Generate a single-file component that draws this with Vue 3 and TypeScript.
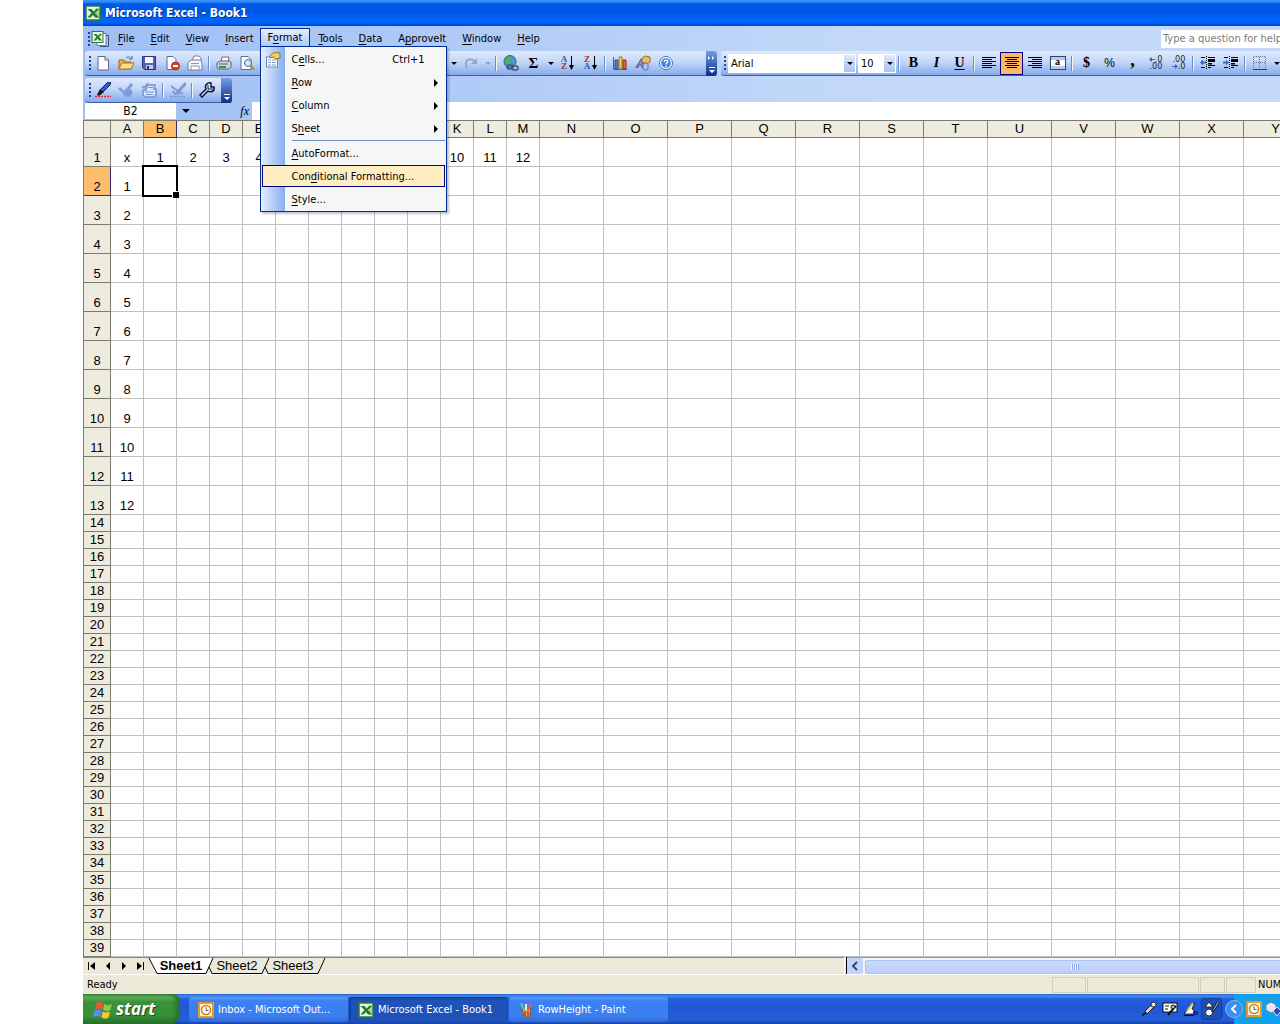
<script setup lang="ts">
import { ref } from 'vue'

interface Tool {
  kind: 'button' | 'sep' | 'arrow' | 'space'
  name?: string
  active?: boolean
}
interface MenuTitle {
  pre: string
  key: string
  post: string
}
interface MenuEntry extends MenuTitle {
  shortcut?: string
  sub?: boolean
  hot?: boolean
  line?: boolean
  icon?: string
}

const b = (name: string, active = false): Tool => ({ kind: 'button', name, active })
const sep: Tool = { kind: 'sep' }
const arrow: Tool = { kind: 'arrow' }

const standard: Tool[] = [
  b('new'), b('open'), b('save'), b('permission'), b('mail'), sep, b('print'), b('preview'),
  { kind: 'space' }, arrow, b('redo'), arrow, sep, b('link'), b('sum'), arrow, b('sortAsc'), b('sortDesc'),
  sep, b('chart'), b('drawing'), b('help'),
]
const formatting: Tool[] = [
  sep, b('bold'), b('italic'), b('underline'), sep, b('left'), b('center', true), b('right'), b('merge'),
  sep, b('currency'), b('percent'), b('comma'), b('moreDecimals'), b('lessDecimals'),
  sep, b('outdent'), b('indent'), sep, b('borders'), arrow,
]
const approval: Tool[] = [b('sign'), b('verify'), b('review'), sep, b('clear'), sep, b('wrench')]

const menusBefore: MenuTitle[] = [
  { pre: '', key: 'F', post: 'ile' },
  { pre: '', key: 'E', post: 'dit' },
  { pre: '', key: 'V', post: 'iew' },
  { pre: '', key: 'I', post: 'nsert' },
]
const menusAfter: MenuTitle[] = [
  { pre: '', key: 'T', post: 'ools' },
  { pre: '', key: 'D', post: 'ata' },
  { pre: 'A', key: 'p', post: 'proveIt' },
  { pre: '', key: 'W', post: 'indow' },
  { pre: '', key: 'H', post: 'elp' },
]
const formatMenu: MenuEntry[] = [
  { pre: 'C', key: 'e', post: 'lls...', shortcut: 'Ctrl+1', icon: 'cells' },
  { pre: '', key: 'R', post: 'ow', sub: true },
  { pre: '', key: 'C', post: 'olumn', sub: true },
  { pre: 'S', key: 'h', post: 'eet', sub: true },
  { pre: '', key: 'A', post: 'utoFormat...', line: true },
  { pre: 'Con', key: 'd', post: 'itional Formatting...', hot: true },
  { pre: '', key: 'S', post: 'tyle...' },
]

const columns = 'ABCDEFGHIJKLMNOPQRSTUVWXY'.split('')
const rows = Array.from({ length: 39 }, (_, i) => i + 1)
function cell(row: number, col: number): string {
  if (row === 1) return col === 0 ? 'x' : col <= 12 ? String(col) : ''
  if (col === 0 && row <= 13) return String(row - 1)
  return ''
}

const nameBox = ref('B2')
const formula = ref('')
const font = ref('Arial')
const size = ref('10')

const page = '<path d="M3 1.5h7l3.5 3.5v10H3z" fill="#fff" stroke="#5a6b96"/><path d="M10 1.5v3.5h3.5" fill="#cfdcf4" stroke="#5a6b96"/>'
const lines = (rowsOf: [number, number][]): string =>
  rowsOf.map(([x, w], i) => `<path d="M${x} ${2.5 + i * 2}h${w}" stroke="#000"/>`).join('')
const indentLines =
  '<path d="M1 2.5h4M8 2.5h7M8 4.5h7M8 6.5h7M8 8.5h4M8 10.5h7M1 12.5h4M8 12.5h3" stroke="#000"/><path d="M8 5.5h7M8 9h4" stroke="#000"/><path d="M6.500 1v14" stroke="#000" stroke-dasharray="1 1"/>'
const excel =
  '<rect x="1" y="1" width="14" height="14" fill="#e9f5e4" stroke="#2d7d32" stroke-width="1.5"/><path d="M11 3h3v10h-3z" fill="#a8d49a"/><path d="M2.500 4h4L8.500 6.500 11 4h3L10 8l4 4.500h-4L8 10l-2.500 2.500h-3L6.500 8z" fill="#237a2c"/>'
const outlook =
  '<rect x="1" y="1" width="14" height="14" fill="#fff3cf" stroke="#e39a2c" stroke-width="2"/><circle cx="8" cy="8" r="4.500" fill="#fff" stroke="#c98322" stroke-width="1.500"/><path d="M8 5v3.500h2.500" fill="none" stroke="#7d5a2c"/>'

const icons: Record<string, string> = {
  excel,
  outlook,
  book:
    '<path d="M9 2.500h6v12H6v-3" fill="#fff" stroke="#6c7faa"/><path d="M15 4.500h2.500v11H9" fill="none" stroke="#3c4f7e"/><rect x="1" y=".5" width="11" height="11" fill="#e9f5e4" stroke="#2d7d32"/><path d="M2.500 3h3L7 5l1.500-2H11L8 6l3 3.500H8L6.500 7.500 5 9.500H2.500L5.500 6z" fill="#237a2c"/>',
  new: page,
  open:
    '<path d="M1 14V5h5l1 2h6v7z" fill="#e9b44c" stroke="#9a6a1c"/><path d="M1 14l3-6h12l-3 6z" fill="#ffdd82" stroke="#a77722"/><path d="M8 3c2-2 4-1 5 1m1-3v3h-3" fill="none" stroke="#3b62ad"/>',
  save:
    '<path d="M1.500 1.500h13v13h-11l-2-2z" fill="#5562b8" stroke="#28327c"/><path d="M4 2h8v6H4z" fill="#f3f6ff"/><path d="M5 10h7v4H5z" fill="#c5cce2"/><path d="M6 11h2v3H6z" fill="#28327c"/>',
  permission:
    '<path d="M3 1.500h6l3 3v10H3z" fill="#fff" stroke="#5a6b96"/><circle cx="11.500" cy="11" r="4" fill="#d9432c" stroke="#a52a16"/><path d="M9 11h5" stroke="#fff" stroke-width="2"/>',
  mail:
    '<path d="M5 6l2-5h5l2 2v5" fill="#fff" stroke="#73809f"/><path d="M1 8l3-3h10l1 3v7H1z" fill="#f4f6fb" stroke="#73809f"/><path d="M4 8.500h8M4 11h8v4H4z" fill="#fff" stroke="#8b96b0"/>',
  print:
    '<path d="M5 7l1-5h7l-1 5" fill="#fff" stroke="#64708c"/><path d="M1 8l3-2h10l1 2v4l-3 2H2l-1-2z" fill="#cfd4df" stroke="#59647e"/><path d="M3 9h9" stroke="#59647e"/><path d="M3 12h7" stroke="#2d9a38" stroke-width="2"/>',
  preview:
    '<path d="M2 1.500h7l3 3v10H2z" fill="#fff" stroke="#5a6b96"/><circle cx="9" cy="8" r="3.500" fill="#cfe7fb" stroke="#536890"/><path d="M11.500 10.500l3.500 4" stroke="#b7872f" stroke-width="2"/>',
  redo: '<path d="M4 13C0 4 8 2 12 7" fill="none" stroke="#95a6c8" stroke-width="2"/><path d="M14 3v6H8z" fill="#95a6c8"/>',
  link:
    '<circle cx="7" cy="6.500" r="6" fill="#4b94d8" stroke="#2c5e9a"/><path d="M3 3l4-2 2 3-3 2 1 3-3 1-2-4zM10 4l2 2-2 4z" fill="#4fb34a"/><rect x="4" y="10" width="6" height="4" rx="2" fill="none" stroke="#46536e" stroke-width="1.500"/><rect x="9" y="11" width="6" height="4" rx="2" fill="none" stroke="#46536e" stroke-width="1.500"/>',
  chart:
    '<path d="M1.500 2v12.500H15" fill="none" stroke="#4a5f92"/><path d="M3 5h3v9H3z" fill="#4c7ed2" stroke="#28508f"/><path d="M7 2h3v12H7z" fill="#f6cf49" stroke="#a3791c"/><path d="M11 5h3v9h-3z" fill="#e0603c" stroke="#8f2e18"/>',
  drawing:
    '<path d="M1 12.500L6 4l3 8.500H7L6 10H4l-1 2.500z" fill="#8f8ad2" stroke="#5c57a2"/><path d="M7 3l3-2 5 1v5l-3 2-5-2z" fill="#e8bd63" stroke="#96712b"/><rect x="8" y="8" width="5" height="7" rx="2" fill="#b7bff0" stroke="#5c6cae"/>',
  help:
    '<circle cx="8" cy="8" r="6.500" fill="#fff" stroke="#3d6fc9"/><circle cx="8" cy="8" r="4.800" fill="#4580dc"/><path d="M6.200 7C6 4.500 10 4.500 9.800 6.700 9.600 8 8 7.800 8 9.500M8 10.500v1.500" fill="none" stroke="#fff" stroke-width="1.300"/>',
  left: lines([[1, 14], [1, 10], [1, 14], [1, 10], [1, 14], [1, 10]]),
  center: lines([[1, 14], [3, 10], [1, 14], [3, 10], [1, 14], [3, 10]]),
  right: lines([[1, 14], [5, 10], [1, 14], [5, 10], [1, 14], [5, 10]]),
  outdent: indentLines + '<path d="M0 7.500l3-3v2h3v2H3v2z" fill="#3d64c4"/>',
  indent: indentLines + '<path d="M6 7.500l-3-3v2H0v2h3v2z" fill="#3d64c4"/>',
  borders: '<path d="M2 1.500h12M2 7.500h12M1.500 2v12M7.500 2v12M13.500 2v12" stroke="#66718c" stroke-dasharray="1 1"/><path d="M1 14.500h14" stroke="#333c55"/>',
  sign: '<path d="M13 0h3l-1 3-7 7-3-2z" fill="#2f5fd0" stroke="#0c1a5c"/><path d="M5 7l4 3-5 4-2-1z" fill="#11131f"/><path d="M0 14.500h16" stroke="#e02c2c" stroke-width="1.500" stroke-dasharray="2 1"/>',
  verify: '<path d="M0 7l2-2 4 4 7-8 2 2-3 4c4 1 3 8-2 8-3 0-5-2-5-4z" fill="#7c9fdc"/>',
  review: '<path d="M1 4l2 2 4-5" fill="none" stroke="#6f93d4" stroke-width="1.500"/><path d="M6 3h8l-1 4h2v6l-2 2H4l-2-2V8h3z" fill="#dbe7fb" stroke="#6f93d4" stroke-width="1.500"/><path d="M7 5.500h5M4 10h9M5 12.500h7" stroke="#6f93d4"/>',
  clear: '<path d="M16 1L7 11" fill="none" stroke="#7c9bd4" stroke-width="3"/><path d="M1 4l4 3 8 5M3 9l2 3 5-1" fill="none" stroke="#7c9bd4" stroke-width="2"/><path d="M0 14.500h15" stroke="#7c9bd4" stroke-width="1.500" stroke-dasharray="3 1"/>',
  wrench: '<path d="M1 13l6-6C5 3 9 0 12 1v4h3c1 4-3 6-6 4l-6 6z" fill="#dce8ff" stroke="#0b1242" stroke-width="1.500"/><path d="M9 3v4h5" fill="none" stroke="#0b1242"/>',
  cells:
    '<rect x="1.500" y="5" width="11" height="10" fill="#fff" stroke="#7189b5"/><path d="M3 8h3M3 10.500h3M3 13h3M7 8h4M7 10.500h4M7 13h4" stroke="#7e96c6"/><path d="M5 4c2-3 4-4 10-3v5l-4 1-3-2-3 1z" fill="#efcf58" stroke="#8b7326"/>',
  paint:
    '<path d="M4 7h9l-1 8H6z" fill="#d9a35b" stroke="#7a5224"/><path d="M6 8L3 1" stroke="#60d060" stroke-width="2"/><path d="M8 8V2" stroke="#e9e9f8" stroke-width="2"/><path d="M10 8l3-6" stroke="#ed5f46" stroke-width="2"/><path d="M7 9v5M10 9v5" stroke="#bb3e2b" stroke-width="1.500"/>',
  mic: '<path d="M2 15c-2-2 4-2 3-4" fill="none" stroke="#111" stroke-width="1.500"/><path d="M4 10l6-6 3 2-7 7z" fill="#d0d0d0" stroke="#222"/><circle cx="12.500" cy="3.500" r="2.500" fill="#e8e8e8" stroke="#222"/>',
  tools: '<rect x="1" y="2" width="14" height="9" fill="#fff" stroke="#111"/><path d="M3 5h4M3 8h3" stroke="#111"/><path d="M6 14l6-7 2-2" stroke="#111" stroke-width="2"/><circle cx="11" cy="6" r="2" fill="#bbb" stroke="#111"/>',
  hand: '<path d="M1 13l4-5 7-7-3 7 3 2v3z" fill="#fff" stroke="#222"/><path d="M4 10l6-8" stroke="#e0bf42" stroke-width="2"/><path d="M10 10h5v4h-5z" fill="#1d2d9a"/><path d="M1 14.500h10" stroke="#111"/>',
  shapes: '<path d="M1 6l4-5 4 5z" fill="#fff" stroke="#222"/><circle cx="5" cy="11.500" r="3.500" fill="#fff" stroke="#222"/><path d="M15 2l-5 8-2 1 1-3 4-7" fill="#8faedb" stroke="#111"/>',
  network: '<path d="M1 4l5-3 5 3v5l-5 3-5-3z" fill="#e6e9ef" stroke="#7c8596"/><path d="M8 10l4-4 4 4-4 5z" fill="#2947b6" stroke="#dbe6ff"/>',
  flag:
    '<path d="M3 3c2-1.500 4-1.500 6 0L8 8.500c-2-1.300-4-1.300-6.500 0z" fill="#f0582c"/><path d="M10 3.500c2 1.300 4 1.300 7 0L15.500 9c-2 1.300-4 1.300-6.500 0z" fill="#8cc84b"/><path d="M1.200 9.700c2-1.300 4-1.300 6.500 0l-1.200 5.500c-2-1.300-4-1.300-6.500 0z" fill="#5b8df0"/><path d="M8.700 10.200c2 1.300 4 1.300 6.500 0l-1.200 5.500c-2 1.300-4 1.300-6.500 0z" fill="#fbc62e"/>',
}
const langIcons = ['mic', 'tools', 'hand', 'shapes']
const textIcons: Record<string, string> = { bold: 'B', italic: 'I', underline: 'U', sum: 'Σ', currency: '$', percent: '%', comma: ',' }
const stacked: Record<string, [string, string]> = {
  sortAsc: ['A', 'Z'],
  sortDesc: ['Z', 'A'],
  moreDecimals: ['.0', '.00'],
  lessDecimals: ['.00', '.0'],
}
const tasks = [
  { label: 'Inbox - Microsoft Out...', icon: 'outlook', on: false },
  { label: 'Microsoft Excel - Book1', icon: 'excel', on: true },
  { label: 'RowHeight - Paint', icon: 'paint', on: false },
]
const bars = { standard, formatting, approval }
</script>

<template>
  <div class="screen">
    <header class="title">
      <svg class="ico" viewBox="0 0 16 16" v-html="icons.excel"></svg>
      <h1>Microsoft Excel - Book1</h1>
    </header>

    <div class="chrome">
      <nav class="menubar">
        <i class="grip"></i>
        <svg class="book" viewBox="0 0 18 16" v-html="icons.book"></svg>
        <button v-for="m in menusBefore" :key="m.key" class="menu">{{ m.pre }}<u>{{ m.key }}</u>{{ m.post }}</button>
        <div class="menu-open">
          <button class="menu">F<u>o</u>rmat</button>
          <ul class="dropdown">
            <li v-for="e in formatMenu" :key="e.pre + e.key + e.post" :class="{ line: e.line }">
              <button :class="{ hot: e.hot }">
                <span class="gutter"><svg v-if="e.icon" class="ico" viewBox="0 0 16 16" v-html="icons[e.icon]"></svg></span>
                <span class="entry">{{ e.pre }}<u>{{ e.key }}</u>{{ e.post }}</span>
                <span v-if="e.shortcut" class="shortcut">{{ e.shortcut }}</span>
                <svg v-if="e.sub" class="sub" viewBox="0 0 4 8"><path d="M0 0l4 4-4 4z" /></svg>
              </button>
            </li>
          </ul>
        </div>
        <button v-for="m in menusAfter" :key="m.key" class="menu">{{ m.pre }}<u>{{ m.key }}</u>{{ m.post }}</button>
        <input class="ask" type="text" placeholder="Type a question for help" aria-label="Type a question for help" />
      </nav>

      <div class="bars">
        <div v-for="(tools, id) in bars" :key="id" class="bar" :class="id">
          <i class="grip"></i>
          <template v-if="id === 'formatting'">
            <span class="pick font"><select v-model="font" aria-label="Font"><option>Arial</option></select><i></i></span>
            <span class="pick size"><select v-model="size" aria-label="Font size"><option>10</option></select><i></i></span>
          </template>
          <template v-for="(t, n) in tools" :key="n">
            <i v-if="t.kind === 'sep'" class="sep"></i>
            <i v-else-if="t.kind === 'space'" class="space"></i>
            <button v-else-if="t.kind === 'arrow'" class="arrow" aria-label="More choices"></button>
            <button v-else class="tool" :class="[t.name, { active: t.active }]" :aria-label="t.name">
              <span v-if="textIcons[t.name!]" class="glyph">{{ textIcons[t.name!] }}</span>
              <template v-else-if="stacked[t.name!]">
                <span class="stack">
                  <b><svg v-if="t.name === 'moreDecimals'" class="way" viewBox="0 0 6 5"><path d="M0 2.500L3 0v2h3v1H3v2z" /></svg>{{ stacked[t.name!][0] }}</b>
                  <b><svg v-if="t.name === 'lessDecimals'" class="way" viewBox="0 0 6 5"><path d="M6 2.500L3 0v2H0v1h3v2z" /></svg>{{ stacked[t.name!][1] }}</b>
                </span>
                <svg v-if="t.name!.startsWith('sort')" class="down" viewBox="0 0 5 14"><path d="M2 0h1v9h2l-2.500 5L0 9h2z" /></svg>
              </template>
              <span v-else-if="t.name === 'merge'" class="merged">a</span>
              <svg v-else class="ico" viewBox="0 0 16 16" v-html="icons[t.name!]"></svg>
            </button>
          </template>
          <button v-if="id !== 'formatting'" class="cap" aria-label="Toolbar options">
            <svg viewBox="0 0 11 25"><path v-if="id === 'standard'" d="M2 5l2 2-2 2zM6 5l2 2-2 2z" /><path d="M3 16h6v1H3zM3 19h6l-3 3z" /></svg>
          </button>
        </div>
      </div>

      <div class="formula">
        <input v-model="nameBox" class="name" type="text" aria-label="Name box" />
        <button class="arrow" aria-label="Names"></button>
        <span class="fx">fx</span>
        <input v-model="formula" class="text" type="text" aria-label="Formula" />
      </div>
    </div>

    <main class="sheet">
      <table>
        <colgroup>
          <col class="c-head" />
          <col v-for="(c, i) in columns" :key="c" :class="i < 13 ? 'c-small' : 'c-wide'" />
        </colgroup>
        <thead>
          <tr>
            <th></th>
            <th v-for="c in columns" :key="c" scope="col" :class="{ picked: c === 'B' }">{{ c }}</th>
          </tr>
        </thead>
        <tbody>
          <tr v-for="r in rows" :key="r" :class="{ tall: r <= 13 }">
            <th scope="row" :class="{ picked: r === 2 }">{{ r }}</th>
            <td v-for="(c, i) in columns" :key="c" :class="{ cursor: r === 2 && i === 1 }">{{ cell(r, i) }}</td>
          </tr>
        </tbody>
      </table>
    </main>

    <div class="tabs">
      <div class="tab-area">
        <button class="step" aria-label="First sheet"><svg viewBox="0 0 8 8"><path d="M0 0h1v8H0zM7 0v8L2 4z" /></svg></button>
        <button class="step" aria-label="Previous sheet"><svg viewBox="0 0 8 8"><path d="M6 0v8L2 4z" /></svg></button>
        <button class="step" aria-label="Next sheet"><svg viewBox="0 0 8 8"><path d="M2 0v8l4-4z" /></svg></button>
        <button class="step" aria-label="Last sheet"><svg viewBox="0 0 8 8"><path d="M7 0h1v8H7zM1 0v8l5-4z" /></svg></button>
        <svg class="slant" viewBox="0 0 10 16"><path d="M1 0h9v16H9z" fill="#fff" /><path d="M1 0l8 15.500h1" class="edge" /></svg>
        <button class="tab on">Sheet1</button>
        <svg class="slant" viewBox="0 0 10 16"><path d="M0 0h9L2 16H0z" fill="#fff" /><path d="M9 0L2 15.500H0M5 9l3 6.500h2" class="edge" /></svg>
        <button class="tab">Sheet2</button>
        <svg class="slant" viewBox="0 0 10 16"><path d="M9 0L2 15.500H0M5 9l3 6.500h2" class="edge" /></svg>
        <button class="tab">Sheet3</button>
        <svg class="slant" viewBox="0 0 10 16"><path d="M9 0L2 15.500H0" class="edge" /></svg>
      </div>
      <i class="splitter"></i>
      <div class="scroll">
        <button aria-label="Scroll left"><svg viewBox="0 0 8 10"><path d="M6 1L2 5l4 4" fill="none" stroke="#35496f" stroke-width="2" /></svg></button>
        <div class="thumb"><i></i></div>
      </div>
    </div>

    <div class="status">
      <span class="ready">Ready</span>
      <i class="pane p1"></i><i class="pane p2"></i><i class="pane p3"></i><i class="pane p4"></i>
      <span class="num">NUM</span>
    </div>

    <footer class="taskbar">
      <button class="start"><svg viewBox="0 0 17 17" v-html="icons.flag"></svg>start</button>
      <button v-for="t in tasks" :key="t.label" class="task" :class="{ on: t.on }">
        <svg class="ico" viewBox="0 0 16 16" v-html="icons[t.icon]"></svg>{{ t.label }}
      </button>
      <div class="lang">
        <button v-for="l in langIcons" :key="l" :class="l" :aria-label="l"><svg viewBox="0 0 16 16" v-html="icons[l]"></svg></button>
      </div>
      <div class="tray">
        <button class="chev" aria-label="Show hidden icons"><svg viewBox="0 0 8 10"><path d="M6 1L2 5l4 4" fill="none" stroke="#fff" stroke-width="2" /></svg></button>
        <svg class="ico" viewBox="0 0 16 16" v-html="icons.outlook"></svg>
        <svg class="ico" viewBox="0 0 16 16" v-html="icons.network"></svg>
      </div>
    </footer>
  </div>
</template>

<style>
body { background: #fff; overflow-x: hidden; }
</style>

<style scoped>
.screen {
  margin-left: 83px;
  overflow: hidden;
  font: 11px/13px "DejaVu Sans Condensed", "DejaVu Sans", sans-serif;
  color: #000;
}
.screen * { box-sizing: border-box; }
button, input, select { font: inherit; color: inherit; border: 0; padding: 0; margin: 0; background: none; border-radius: 0; outline: 0; }
button { white-space: nowrap; }
svg { display: block; flex: none; }
.ico { width: 16px; height: 16px; }
u { text-underline-offset: 2px; text-decoration-thickness: 1px; text-decoration-skip-ink: none; }

.title {
  height: 26px;
  display: flex;
  align-items: center;
  gap: 4px;
  padding-left: 2px;
  background: linear-gradient(#3d95ff 0, #2a86f8 2px, #0057e5 4px, #0055e5 12px, #0065fd 19px, #0062f6 23px, #0040c8 26px);
}
.title h1 { margin: 0; font: bold 12px/16px "DejaVu Sans Condensed", sans-serif; color: #fff; text-shadow: 1px 1px #0a2f8c; }

.chrome { background: linear-gradient(90deg, #9ebef5, #c4d9f9 800px); }
.menubar { height: 25px; display: flex; align-items: center; padding-left: 5px; }
.grip { flex: none; width: 2px; height: 14px; background: repeating-linear-gradient(#27418a 0 2px, transparent 2px 4px); }
.book { width: 18px; height: 16px; margin: 0 1px; }
.menu { height: 19px; padding: 0 8px; flex: none; }
.menu-open { position: relative; flex: none; height: 25px; display: flex; align-items: center; margin-left: -2px; }
.menu-open > .menu { height: 21px; padding: 0 7px 4px; border: 1px solid #002d96; border-bottom: 0; background: linear-gradient(#e6effd, #a6c4f3); }
.dropdown {
  position: absolute;
  z-index: 5;
  left: 0;
  top: 20px;
  width: 187px;
  margin: 0;
  padding: 1px 1px 0;
  list-style: none;
  border: 1px solid #002d96;
  background: linear-gradient(90deg, #e3efff, #88aef0 24px, #f6f6f6 24px);
  box-shadow: 2px 2px 2px rgba(60, 80, 120, .35);
}
.dropdown button { width: 100%; height: 23px; display: flex; align-items: center; text-align: left; border: 1px solid transparent; }
.dropdown .hot { height: 22px; margin-bottom: 1px; border-color: #000080; background: #ffeec2; }
.dropdown .line { padding-top: 2px; background: linear-gradient(#6a8ccb, #6a8ccb) 30px 0 / 160px 1px no-repeat; }
.gutter { width: 29px; padding-left: 2px; }
.entry { flex: 1; }
.shortcut { padding-right: 19px; }
.sub { width: 4px; height: 8px; margin-right: 6px; }
.ask { margin-left: auto; flex: none; width: 119px; height: 18px; padding-left: 2px; background: #fff; }
.ask::placeholder { color: #7d7d7d; opacity: 1; }

.bars { display: flex; flex-wrap: wrap; row-gap: 2px; padding: 0 0 0 2px; margin-right: -20px; height: 51px; align-content: flex-start; }
.bar {
  flex: none;
  height: 25px;
  display: flex;
  align-items: center;
  padding-left: 4px;
  border-radius: 3px;
  border-bottom: 1px solid #3b619c;
  background: linear-gradient(#dfeafc, #c3d7f8 45%, #85aaeb);
}
.standard { margin-right: 4px; }
.standard .cap { margin-left: 29px; }
.formatting { flex: 1 1 500px; min-width: 0; padding-left: 3px; border-radius: 3px 0 0 3px; }
.approval .cap { margin-left: 3px; }
.tool { flex: none; width: 23px; height: 23px; display: flex; align-items: center; justify-content: center; }
.active { border: 1px solid #000080; background: #ffb766; }
.sep { flex: none; width: 6px; height: 15px; background: linear-gradient(90deg, transparent 2px, #6a8ccb 2px 3px, #f1f6ff 3px 4px, transparent 4px); }
.space { flex: none; width: 190px; }
.arrow { flex: none; width: 11px; height: 20px; display: flex; align-items: center; justify-content: center; }
.arrow::before, .pick i::before { content: ""; border: 3px solid transparent; border-top-color: #000; border-bottom: 0; }
.formula .arrow::before { border-width: 4px 4px 0; }
.redo + .arrow::before { border-top-color: #8aa0c9; }
.cap { align-self: flex-start; width: 11px; height: 25px; border-radius: 0 3px 3px 0; background: linear-gradient(#759be8, #0d2f86); }
.cap svg { width: 11px; height: 25px; fill: #fff; }
.glyph { font: bold 14px/16px "Liberation Serif", serif; }
.italic .glyph { font-style: italic; }
.underline .glyph { text-decoration: underline; text-underline-offset: 2px; }
.currency .glyph { font-size: 14px; }
.percent .glyph { font: 12px/16px "Liberation Sans", sans-serif; }
.sum .glyph { font-size: 15px; }
.comma .glyph { font-size: 18px; line-height: 10px; padding-bottom: 6px; }
.stack { display: flex; flex-direction: column; align-items: flex-end; font: 9px/7px "DejaVu Sans Condensed", sans-serif; color: #1d2438; }
.stack b { display: flex; align-items: center; font-weight: inherit; }
.way { width: 6px; height: 5px; fill: #3d64c4; }
.sortAsc .stack, .sortDesc .stack { font: bold 9px/7px "Liberation Serif", serif; align-items: center; }
.sortAsc b:first-child, .sortDesc b:last-child { color: #2d59b4; }
.sortAsc b:last-child, .sortDesc b:first-child { color: #a23232; }
.down { width: 5px; height: 14px; margin-left: 2px; }
.merged { width: 16px; height: 14px; border: 1px solid #2f456f; background: linear-gradient(#b7cbee 3px, #fff 3px 9px, #b7cbee 9px); font: bold 10px/10px "Liberation Serif", serif; text-align: center; }
.pick { flex: none; height: 19px; display: flex; background: #fff; margin-left: 2px; }
.pick select { flex: 1; min-width: 0; appearance: none; padding-left: 3px; }
.pick i { width: 11px; margin: 1px; background: linear-gradient(#dce8fc, #a9c4f0); display: flex; align-items: center; justify-content: center; }
.font { width: 128px; }
.size { width: 38px; }

.formula { height: 18px; display: flex; align-items: center; padding-left: 2px; }
.name { width: 91px; height: 16px; background: #fff; text-align: center; font-size: 12px; }
.formula .arrow { width: 20px; }
.fx { width: 56px; padding-right: 3px; text-align: right; font: italic 12px/14px "Liberation Serif", serif; }
.text { flex: 1; height: 18px; background: #fff; }

.sheet { overflow: hidden; border-top: 1px solid #7b7b6e; border-left: 1px solid #7b7b6e; }
table { table-layout: fixed; width: 1224px; border-spacing: 0; font: 13px/16px "Liberation Sans", Arial, sans-serif; }
.c-head { width: 27px; }
.c-small { width: 33px; }
.c-wide { width: 64px; }
th, td { padding: 0; height: 17px; border-right: 1px solid #c0c0c0; border-bottom: 1px solid #c0c0c0; text-align: center; vertical-align: bottom; font-weight: normal; }
th { background: #eeebdf; border-color: #7b7b6e; }
.tall th, .tall td { height: 29px; }
.picked { background: #fcbe6c; border-color: #3b2d6e; }
.cursor { position: relative; }
.cursor::before { content: ""; position: absolute; inset: -2px; border: 2px solid #000; }
.cursor::after { content: ""; position: absolute; right: -3px; bottom: -3px; width: 6px; height: 6px; background: #000; border: 1px solid #fff; border-width: 1px 0 0 1px; }

.tabs { height: 17px; display: flex; background: #ece9d8; }
.tab-area { flex: 0 0 761px; display: flex; border-top: 1px solid #8b8b7c; padding-left: 1px; }
.step { width: 16px; display: flex; align-items: center; justify-content: center; }
.step svg { width: 8px; height: 8px; }
.slant { width: 10px; height: 16px; }
.edge { fill: none; stroke: #000; }
.tab { font: 13px/15px "Liberation Sans", sans-serif; width: 46px; border-bottom: 1px solid #000; }
.on { font-weight: bold; background: #fff; }
.splitter { width: 3px; border-left: 1px solid #fff; border-right: 1px solid #000; }
.scroll { flex: 1; display: flex; gap: 2px; background: #f4f3ee; border-top: 1px solid #9b9b8e; margin-right: -5px; }
.scroll button { width: 16px; background: #c3d4fb; border-radius: 2px; display: flex; align-items: center; justify-content: center; }
.scroll svg { width: 8px; height: 10px; }
.thumb { flex: 1; margin-top: 2px; border: 1px solid #b0c4f4; border-radius: 2px; background: linear-gradient(#cad9fe, #bdcffa); display: flex; align-items: center; justify-content: center; }
.thumb i { width: 8px; height: 6px; background: repeating-linear-gradient(90deg, #eef4fe 0 1px, #8ca6e4 1px 2px); }

.status { height: 20px; display: flex; align-items: center; border-top: 1px solid #fff; padding-left: 4px; background: #ece9d8; }
.ready { margin-right: auto; }
.pane { flex: none; height: 16px; margin-right: 1px; border: 1px solid #d3cfbd; }
.p1 { width: 34px; }
.p2 { width: 112px; }
.p3 { width: 25px; }
.p4 { width: 30px; }
.num { width: 23px; padding-left: 1px; overflow: hidden; }

.taskbar { height: 30px; display: flex; background: linear-gradient(#2a5fc8 0, #3f8cf0 2px, #245edb 5px, #2157d7 14px, #245edb 26px, #1941a5 30px); color: #fff; }
.start {
  width: 97px;
  margin-right: 9px;
  display: flex;
  align-items: center;
  gap: 4px;
  padding-left: 10px;
  border-radius: 0 8px 10px 0;
  background: linear-gradient(#3c873c 0, #5fb25c 3px, #3a913a 8px, #369036 22px, #2a6f2a 30px);
  box-shadow: inset -4px 0 5px #2a6f2a;
  font: italic bold 17px/20px "Open Sans", sans-serif;
  text-shadow: 1px 1px 1px #1d4a1d;
}
.start svg { width: 19px; height: 19px; }
.task { flex: none; width: 159px; height: 25px; margin: 3px 1px 0 0; display: flex; align-items: center; gap: 4px; padding-left: 9px; border-radius: 3px; background: linear-gradient(#5a9bff, #3c81f3 4px, #3a7ef0 20px, #2f6ad8); }
.taskbar .task.on { background: #1e52b7; font-weight: normal; box-shadow: inset 1px 1px 2px #12357f; }
.lang { margin-left: auto; display: flex; align-items: center; }
.lang button { width: 21px; height: 22px; display: flex; align-items: center; justify-content: center; }
.lang svg { width: 16px; height: 16px; }
.lang .shapes { background: #1c4fb8; border: 1px solid #163f97; border-radius: 3px; }
.tray { flex: none; width: 58px; display: flex; align-items: center; gap: 3px; padding-left: 3px; background: linear-gradient(90deg, transparent 12px, #12a0ee 12px); }
.chev { flex: none; width: 18px; height: 18px; border-radius: 9px; background: #3d8df0; border: 1px solid #7fb6f7; display: flex; align-items: center; justify-content: center; }
.chev svg { width: 8px; height: 10px; }
</style>
